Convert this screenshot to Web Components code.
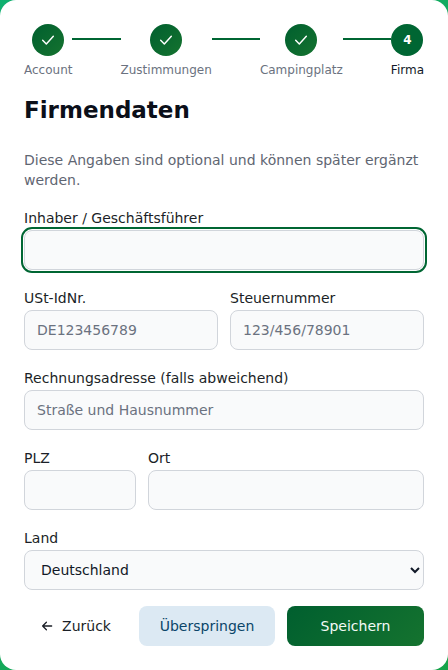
<!DOCTYPE html>
<html lang="de">
<head>
<meta charset="utf-8">
<title>Firmendaten</title>
<style>
  html, body { margin: 0; height: 100%; }
  body {
    font-family: "DejaVu Sans", sans-serif;
    background: linear-gradient(135deg, #10b070, #16a34a);
    overflow: hidden;
  }
</style>
</head>
<body>
<signup-card>
  <wizard-steps current="4" steps="Account,Zustimmungen,Campingplatz,Firma"></wizard-steps>
  <h-title>Firmendaten</h-title>
  <p-hint>Diese Angaben sind optional und können später ergänzt werden.</p-hint>
  <form-row>
    <text-field label="Inhaber / Geschäftsführer" focused></text-field>
  </form-row>
  <form-row columns="1fr 1fr">
    <text-field label="USt-IdNr." placeholder="DE123456789"></text-field>
    <text-field label="Steuernummer" placeholder="123/456/78901"></text-field>
  </form-row>
  <form-row>
    <text-field label="Rechnungsadresse (falls abweichend)" placeholder="Straße und Hausnummer"></text-field>
  </form-row>
  <form-row columns="112px 1fr">
    <text-field label="PLZ"></text-field>
    <text-field label="Ort"></text-field>
  </form-row>
  <form-row>
    <select-field label="Land" value="Deutschland"></select-field>
  </form-row>
  <wizard-actions></wizard-actions>
</signup-card>

<script>
const CHECK = `<svg width="16" height="16" viewBox="0 0 24 24" fill="none" stroke="#fff" stroke-width="2.2" stroke-linecap="round" stroke-linejoin="round"><path d="M4 12.5l5.5 5.5L20 6.5"/></svg>`;

class SignupCard extends HTMLElement {
  constructor() {
    super();
    this.attachShadow({ mode: 'open' }).innerHTML = `
      <style>
        :host {
          display: block;
          box-sizing: border-box;
          height: 670px;
          padding: 24px 24px 0;
          background: #fff;
          border-radius: 16px;
          overflow: hidden;
        }
      </style>
      <slot></slot>`;
  }
}

class WizardSteps extends HTMLElement {
  constructor() {
    super();
    const steps = this.getAttribute('steps').split(',');
    const current = parseInt(this.getAttribute('current'));
    const items = steps.map((label, i) => {
      const n = i + 1;
      const done = n < current;
      return `<div class="step ${n == current ? 'active' : ''}">
          <div class="dot ${done ? 'done' : 'now'}">${done ? CHECK : n}</div>
          <div class="label">${label}</div>
        </div>`;
    });
    const html = items.map((item, i) =>
      i < items.length - 1 ? `${item}<div class="line"></div>` : item).join('');
    this.attachShadow({ mode: 'open' }).innerHTML = `
      <style>
        :host { display: flex; align-items: flex-start; }
        .step { display: flex; flex-direction: column; align-items: center; flex: none; }
        .dot {
          width: 32px; height: 32px; border-radius: 50%;
          display: flex; align-items: center; justify-content: center;
          color: #fff; font-size: 12px; font-weight: 700;
          background: #006633;
        }
        .dot.done { background: linear-gradient(135deg, #005f2f, #15732f); }
        .label {
          margin-top: 6px; font-size: 12px; line-height: 16px;
          color: #6b7280; white-space: nowrap;
        }
        .active .label { color: #111827; }
        .line { flex: 1; height: 2px; background: #006633; margin-top: 14px; }
      </style>
      ${html}`;
  }
}

class HTitle extends HTMLElement {
  constructor() {
    super();
    this.attachShadow({ mode: 'open' }).innerHTML = `
      <style>
        :host { display: block; margin-top: 16px; font-size: 23px; line-height: 32px; font-weight: 700; color: #0b0f19; }
      </style>
      <slot></slot>`;
  }
}

class PHint extends HTMLElement {
  constructor() {
    super();
    this.attachShadow({ mode: 'open' }).innerHTML = `
      <style>
        :host { display: block; margin-top: 24px; font-size: 14px; line-height: 20px; color: #5f6672; }
      </style>
      <slot></slot>`;
  }
}

class FormRow extends HTMLElement {
  constructor() {
    super();
    const cols = this.getAttribute('columns') || '1fr';
    this.attachShadow({ mode: 'open' }).innerHTML = `
      <style>
        :host { display: grid; grid-template-columns: ${cols}; column-gap: 12px; margin-top: 18px; }
      </style>
      <slot></slot>`;
  }
}

const FIELD_CSS = `
  :host { display: block; min-width: 0; }
  label { display: block; font-size: 14px; line-height: 20px; color: #1b1f27; margin-bottom: 2px; }
  .box {
    box-sizing: border-box; width: 100%; height: 40px;
    background: #f9fafb; border: 1px solid #d1d5db; border-radius: 8px;
    font: 14px "DejaVu Sans", sans-serif; color: #111827;
  }
`;

class TextField extends HTMLElement {
  constructor() {
    super();
    const label = this.getAttribute('label');
    const placeholder = this.getAttribute('placeholder') || '';
    const focused = this.hasAttribute('focused');
    this.attachShadow({ mode: 'open' }).innerHTML = `
      <style>
        ${FIELD_CSS}
        input { display: block; padding: 0 12px; outline: none; }
        input::placeholder { color: #6b7280; opacity: 1; }
        input.focus { outline: 2px solid #006633; outline-offset: 1px; }
      </style>
      <label>${label}</label>
      <input class="box ${focused ? 'focus' : ''}" type="text" placeholder="${placeholder}">`;
  }
}

class SelectField extends HTMLElement {
  constructor() {
    super();
    const label = this.getAttribute('label');
    const value = this.getAttribute('value');
    this.attachShadow({ mode: 'open' }).innerHTML = `
      <style>
        ${FIELD_CSS}
        select { display: block; padding: 0 12px; outline: none; }
      </style>
      <label>${label}</label>
      <select class="box"><option>${value}</option></select>`;
  }
}

class WizardActions extends HTMLElement {
  constructor() {
    super();
    this.attachShadow({ mode: 'open' }).innerHTML = `
      <style>
        :host { display: flex; gap: 12px; margin-top: 16px; }
        button {
          height: 40px; border: 0; border-radius: 8px; padding: 0;
          font: 14px "DejaVu Sans", sans-serif;
          display: flex; align-items: center; justify-content: center;
        }
        .back { width: 103px; background: transparent; color: #1b1f27; gap: 8px; }
        .skip { width: 136px; background: #dce9f3; color: #0a4569; }
        .save { flex: 1; color: #f4faf6; background: linear-gradient(135deg, #005f2f, #15732f); }
      </style>
      <button class="back">
        <svg width="14" height="14" viewBox="0 0 24 24" fill="none" stroke="currentColor" stroke-width="2.2" stroke-linecap="round" stroke-linejoin="round"><path d="M20 12H4.5M11 5.5L4.5 12l6.5 6.5"/></svg>
        Zurück
      </button>
      <button class="skip">Überspringen</button>
      <button class="save">Speichern</button>`;
  }
}

customElements.define('signup-card', SignupCard);
customElements.define('wizard-steps', WizardSteps);
customElements.define('h-title', HTitle);
customElements.define('p-hint', PHint);
customElements.define('form-row', FormRow);
customElements.define('text-field', TextField);
customElements.define('select-field', SelectField);
customElements.define('wizard-actions', WizardActions);
</script>
</body>
</html>
